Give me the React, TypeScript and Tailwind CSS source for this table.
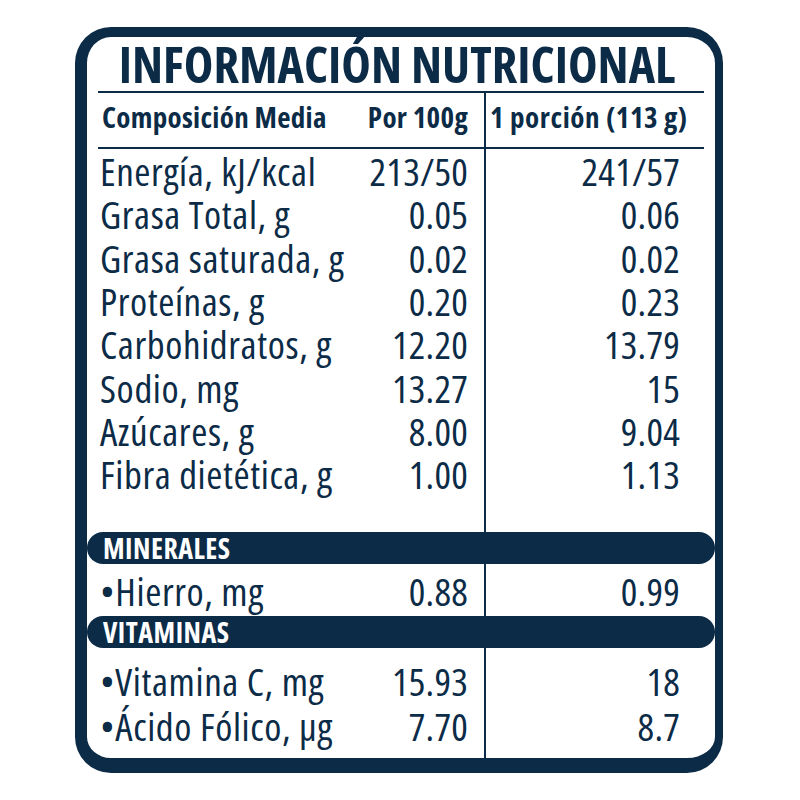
import React from "react"

const rows = [
  { label: "Energía, kJ/kcal", a: "213/50", b: "241/57" },
  { label: "Grasa Total, g", a: "0.05", b: "0.06" },
  { label: "Grasa saturada, g", a: "0.02", b: "0.02" },
  { label: "Proteínas, g", a: "0.20", b: "0.23" },
  { label: "Carbohidratos, g", a: "12.20", b: "13.79" },
  { label: "Sodio, mg", a: "13.27", b: "15" },
  { label: "Azúcares, g", a: "8.00", b: "9.04" },
  { label: "Fibra dietética, g", a: "1.00", b: "1.13" },
]

const font = { fontFamily: '"Open Sans", "DejaVu Sans Condensed", sans-serif', fontStretch: "75%" }

function Row({ label, a, b, h = "h-[43.3px]" }: { label: string; a: string; b: string; h?: string }) {
  return (
    <div className={`mx-[11px] grid grid-cols-[388px_1fr] text-[39px] font-medium leading-none ${h}`}>
      <div className="flex items-center justify-between border-r-2 border-[#0c2b47] pl-[2px] pr-[16px]">
        <span className="tracking-[0.6px]">{label}</span>
        <span className="tracking-[0.2px]">{a}</span>
      </div>
      <div className="flex items-center justify-end pr-[24px] tracking-[0.2px]">{b}</div>
    </div>
  )
}

function Divider({ h }: { h: string }) {
  return (
    <div className={`mx-[11px] grid grid-cols-[388px_1fr] ${h}`}>
      <div className="border-r-2 border-[#0c2b47]" />
      <div />
    </div>
  )
}

function Bar({ title }: { title: string }) {
  return (
    <div className="flex h-[32px] items-center rounded-full bg-[#0c2b47] pl-[16px] text-[28px] font-bold leading-none tracking-[0.5px] text-white">
      {title}
    </div>
  )
}

export default function App() {
  return (
    <div className="h-[800px] w-[800px] bg-white pt-[27px] pl-[75px] text-[#0c2b47]" style={font}>
      <div className="flex h-[746px] w-[648px] flex-col overflow-hidden rounded-[36px] border-t-[10px] border-r-[8px] border-b-[15px] border-l-[12px] border-[#0c2b47]">
        <div className="flex h-[54px] items-center justify-center pr-[8px] text-[50px] font-bold leading-none">
          INFORMACIÓN NUTRICIONAL
        </div>

        <div className="mx-[11px] grid h-[58px] grid-cols-[388px_1fr] border-y-2 border-[#0c2b47] text-[29px] font-bold leading-none tracking-[0.3px]">
          <div className="flex items-center justify-between border-r-2 border-[#0c2b47] pl-[4px] pr-[16px] pb-[8px]">
            <span>Composición Media</span>
            <span>Por 100g</span>
          </div>
          <div className="flex items-center pl-[4px] pb-[8px] tracking-[0.6px]">1 porción (113 g)</div>
        </div>

        {rows.map((r) => (
          <Row key={r.label} {...r} />
        ))}

        <Divider h="h-[37px]" />

        <Bar title="MINERALES" />
        <Row label="•Hierro, mg" a="0.88" b="0.99" h="h-[52px]" />
        <Bar title="VITAMINAS" />

        <Divider h="h-[10px]" />
        <Row label="•Vitamina C, mg" a="15.93" b="18" h="h-[45px]" />
        <Row label="•Ácido Fólico, µg" a="7.70" b="8.7" h="h-[45px]" />
        <div className="mx-[11px] grid flex-1 grid-cols-[388px_1fr]">
          <div className="border-r-2 border-[#0c2b47]" />
          <div />
        </div>
      </div>
    </div>
  )
}
